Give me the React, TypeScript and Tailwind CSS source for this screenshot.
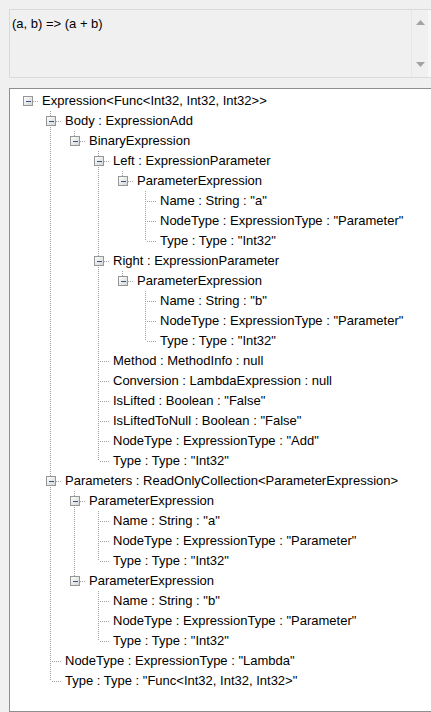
import type { ReactNode } from "react";

type Node = { label: string; children?: Node[] };

const param = (name: string): Node => ({
  label: "ParameterExpression",
  children: [
    { label: `Name : String : "${name}"` },
    { label: 'NodeType : ExpressionType : "Parameter"' },
    { label: 'Type : Type : "Int32"' },
  ],
});

const tree: Node = {
  label: "Expression<Func<Int32, Int32, Int32>>",
  children: [
    {
      label: "Body : ExpressionAdd",
      children: [
        {
          label: "BinaryExpression",
          children: [
            { label: "Left : ExpressionParameter", children: [param("a")] },
            { label: "Right : ExpressionParameter", children: [param("b")] },
            { label: "Method : MethodInfo : null" },
            { label: "Conversion : LambdaExpression : null" },
            { label: 'IsLifted : Boolean : "False"' },
            { label: 'IsLiftedToNull : Boolean : "False"' },
            { label: 'NodeType : ExpressionType : "Add"' },
            { label: 'Type : Type : "Int32"' },
          ],
        },
      ],
    },
    {
      label: "Parameters : ReadOnlyCollection<ParameterExpression>",
      children: [param("a"), param("b")],
    },
    { label: 'NodeType : ExpressionType : "Lambda"' },
    { label: 'Type : Type : "Func<Int32, Int32, Int32>"' },
  ],
};

type Row = { label: string; level: number; hasKids: boolean; last: boolean; open: boolean[] };

function flatten(node: Node, level: number, last: boolean, open: boolean[], out: Row[]) {
  out.push({ label: node.label, level, hasKids: !!node.children?.length, last, open });
  const kids = node.children ?? [];
  kids.forEach((k, i) => flatten(k, level + 1, i === kids.length - 1, [...open, !last], out));
  return out;
}

const rows = flatten(tree, 0, true, [], []);

// column of the connector for each level, relative to the row start (x = 10)
const col = (level: number) => 16.5 + level * 23.75;
const H = 20;

function Connector({ row }: { row: Row }) {
  const x = Math.round(col(row.level)) + 0.5;
  const w = Math.round(col(row.level)) + 15;
  const parts: ReactNode[] = [];
  const dots = { stroke: "#a0a0a0", strokeWidth: 1, strokeDasharray: "1 1" };

  // continuing lines of ancestors (skip root level)
  row.open.forEach((o, a) => {
    if (a >= 1 && o) {
      const ax = Math.round(col(a)) + 0.5;
      parts.push(<line key={`a${a}`} x1={ax} y1={0} x2={ax} y2={H} {...dots} />);
    }
  });

  if (row.level > 0) {
    parts.push(<line key="v" x1={x} y1={0} x2={x} y2={row.last ? 10 : H} {...dots} />);
  }
  parts.push(<line key="h" x1={x + 1} y1={10.5} x2={x + 10} y2={10.5} {...dots} />);

  if (row.hasKids) {
    const bx = Math.round(col(row.level)) - 4;
    parts.push(
      <g key="box">
        <rect x={bx + 0.5} y={5.5} width={9} height={9} fill="url(#boxfill)" stroke="#969696" />
        <line x1={bx + 2.5} y1={10.5} x2={bx + 7.5} y2={10.5} stroke="#3d5387" strokeWidth={1} />
      </g>
    );
  }

  return (
    <svg width={w} height={H} className="shrink-0" shapeRendering="crispEdges">
      <defs>
        <linearGradient id="boxfill" x1="0" y1="0" x2="1" y2="1">
          <stop offset="0" stopColor="#ffffff" />
          <stop offset="1" stopColor="#d4d4d4" />
        </linearGradient>
      </defs>
      {parts}
    </svg>
  );
}

export default function App() {
  return (
    <div
      className="flex h-[712px] w-[431px] flex-col overflow-hidden bg-[#f0f0f0] pl-[9px] pt-[9px] text-[13px] text-black"
      style={{ fontFamily: '"Liberation Sans", Arial, sans-serif' }}
    >
      <div className="flex h-[69px] shrink-0 border-l border-t border-b border-[#d9d9d9] bg-[#f0f0f0]">
        <div className="flex-1 pl-[2px] pt-[6px] leading-[16px]">(a, b) =&gt; (a + b)</div>
        <div className="flex w-[17px] flex-col items-center justify-between border-l border-[#e6e6e6] py-[10px]">
          <svg width="9" height="5">
            <path d="M0 5 L4.5 0 L9 5 Z" fill="#a3a3a3" />
          </svg>
          <svg width="9" height="5">
            <path d="M0 0 L4.5 5 L9 0 Z" fill="#a3a3a3" />
          </svg>
        </div>
        <div className="w-[3px] bg-[#f7f7f7]" />
      </div>

      <div className="mt-[10px] flex-1 border-l border-t border-b border-[#8e8e8e] bg-white pt-[2px]">
        {rows.map((r, i) => (
          <div key={i} className="flex h-[20px] items-center whitespace-nowrap">
            <Connector row={r} />
            <span className="leading-[20px]">{r.label}</span>
          </div>
        ))}
      </div>
    </div>
  );
}
